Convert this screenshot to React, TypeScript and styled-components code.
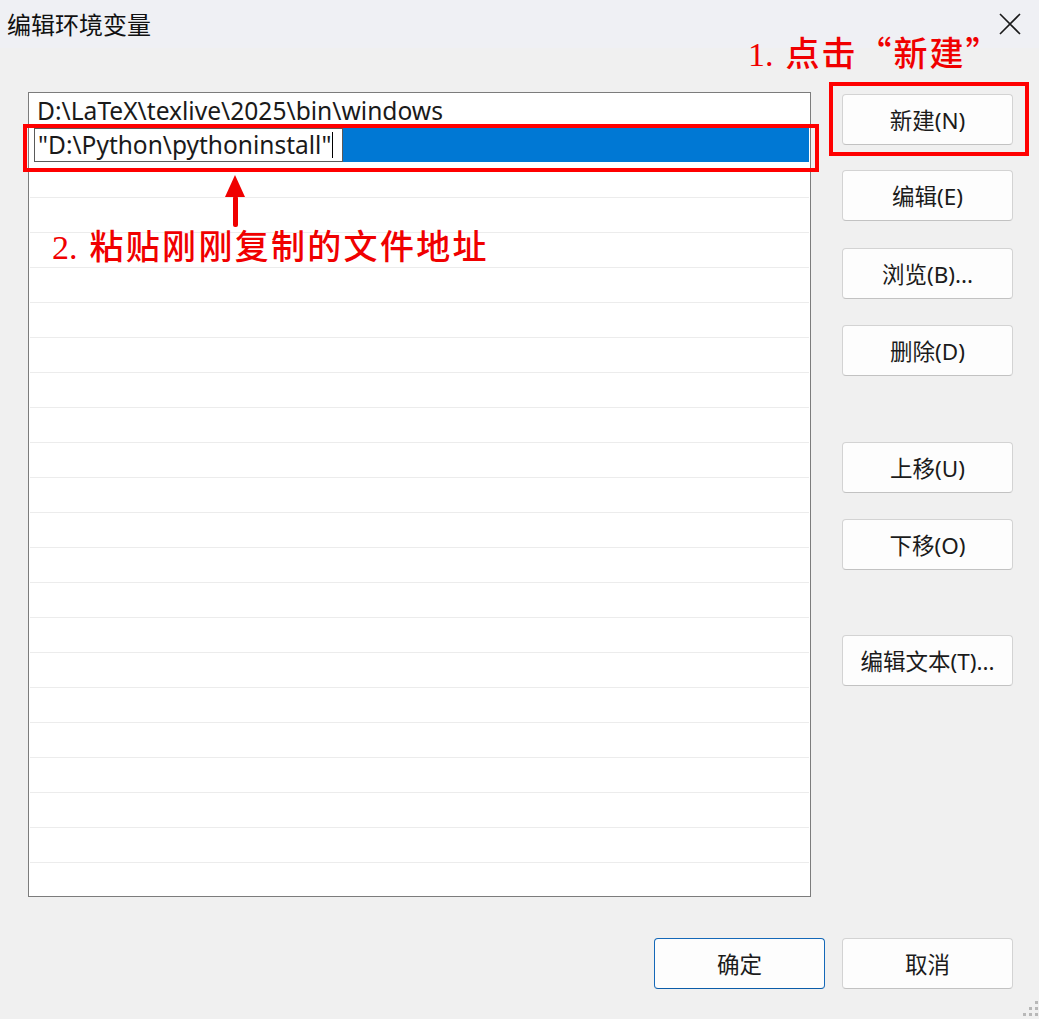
import React, { FC } from 'react';
import styled, { createGlobalStyle } from 'styled-components';

const GlobalStyle = createGlobalStyle`
  html, body {
    margin: 0;
    padding: 0;
    background: #f0f0f0;
  }
`;

const UI_FONT = `"Noto Sans", "Noto Sans CJK SC", sans-serif`;
const NOTE_FONT = `"Liberation Serif", "Noto Sans CJK SC", serif`;

const Window = styled.div`
  position: relative;
  width: 1039px;
  height: 1019px;
  background: #f0f0f0;
  font-family: ${UI_FONT};
  color: #1a1a1a;
  overflow: hidden;
  display: flex;
  flex-direction: column;
`;

const TitleBar = styled.div`
  height: 48px;
  display: flex;
  align-items: center;
  justify-content: space-between;
  padding: 0 18px 0 7px;
  background: #eff0f4;
  box-sizing: border-box;
`;

const Title = styled.div`
  font-family: "Noto Sans CJK SC", sans-serif;
  font-size: 24px;
  margin-top: -2px;
  color: #111;
`;

const CloseButton = styled.div`
  width: 22px;
  height: 22px;
  margin-top: -1px;
  display: flex;
`;

const Body = styled.div`
  display: flex;
  padding: 44px 0 0 28px;
`;

const ListBox = styled.div`
  width: 783px;
  height: 805px;
  box-sizing: border-box;
  border: 1px solid #7c7c7c;
  background: #fff;
  overflow: hidden;
`;

const Row = styled.div<{ $lined?: boolean }>`
  height: 35px;
  box-sizing: border-box;
  display: flex;
  align-items: center;
  margin: 0 1px;
  border-bottom: 1px solid ${(p) => (p.$lined ? '#ececec' : 'transparent')};
`;

const RowText = styled.span`
  padding-left: 7px;
  font-size: 24.6px;
  line-height: 30px;
  margin-top: 1px;
  white-space: nowrap;
`;

const EditRow = styled.div`
  height: 35px;
  display: flex;
  padding: 0 1px 1px 5px;
  box-sizing: border-box;
`;

const EditBox = styled.div`
  width: 309px;
  box-sizing: border-box;
  border: 1px solid #5a5a5a;
  background: #fff;
  display: flex;
  align-items: center;
  padding-left: 3px;
  font-size: 24.5px;
  line-height: 30px;
  white-space: nowrap;
`;

const Caret = styled.span`
  display: inline-block;
  width: 1px;
  height: 26px;
  background: #000;
  margin-left: 1px;
`;

const Selection = styled.div`
  flex: 1;
  background: #0078d4;
`;

const ButtonColumn = styled.div`
  display: flex;
  flex-direction: column;
  margin-left: 31px;
  padding-top: 2px;
`;

const Button = styled.div<{ $top?: number; $primary?: boolean }>`
  width: 171px;
  height: 51px;
  box-sizing: border-box;
  margin-top: ${(p) => p.$top ?? 0}px;
  background: #fdfdfd;
  border: 1px solid ${(p) => (p.$primary ? '#1468b8' : '#d3d3d3')};
  border-bottom-color: ${(p) => (p.$primary ? '#0b5ca8' : '#c2c2c2')};
  border-radius: 4px;
  display: flex;
  align-items: center;
  justify-content: center;
  font-size: 22.5px;
  color: #1b1b1b;
  white-space: nowrap;
`;

const Footer = styled.div`
  display: flex;
  justify-content: flex-end;
  gap: 17px;
  padding: 41px 26px 0 0;
`;

const RedFrame = styled.div<{ $x: number; $y: number; $w: number; $h: number }>`
  position: absolute;
  left: ${(p) => p.$x}px;
  top: ${(p) => p.$y}px;
  width: ${(p) => p.$w}px;
  height: ${(p) => p.$h}px;
  box-sizing: border-box;
  border: 4px solid #ff0000;
  pointer-events: none;
`;

const Note = styled.div<{ $x: number; $y: number }>`
  position: absolute;
  left: ${(p) => p.$x}px;
  top: ${(p) => p.$y}px;
  font-family: ${NOTE_FONT};
  color: #f00000;
  font-size: 34px;
  font-weight: 500;
  white-space: nowrap;
  line-height: 1;
`;

const NoteCjk = styled.span<{ $spacing?: number; $gap?: number }>`
  font-family: "Noto Sans CJK SC", sans-serif;
  letter-spacing: ${(p) => p.$spacing ?? 0}px;
  margin-left: ${(p) => p.$gap ?? 0}px;
`;

const Arrow = styled.svg`
  position: absolute;
  left: 224px;
  top: 174px;
`;

const Grip = styled.svg`
  position: absolute;
  right: 0;
  bottom: 0;
`;

const entries = ['D:\\LaTeX\\texlive\\2025\\bin\\windows'];
const rowCount = 23;

const sideButtons: { label: string; top: number }[] = [
  { label: '新建(N)', top: 0 },
  { label: '编辑(E)', top: 25 },
  { label: '浏览(B)...', top: 27 },
  { label: '删除(D)', top: 26 },
  { label: '上移(U)', top: 66 },
  { label: '下移(O)', top: 26 },
  { label: '编辑文本(T)...', top: 65 },
];

const App: FC = () => {
  const emptyRows = Array.from({ length: rowCount - 2 }, (_, i) => i);
  return (
    <Window>
      <GlobalStyle />
      <TitleBar>
        <Title>编辑环境变量</Title>
        <CloseButton>
          <svg width="22" height="22" viewBox="0 0 22 22">
            <path d="M1 1 L21 21 M21 1 L1 21" stroke="#1a1a1a" strokeWidth="1.6" fill="none" />
          </svg>
        </CloseButton>
      </TitleBar>
      <Body>
        <ListBox>
          <Row>
            <RowText>{entries[0]}</RowText>
          </Row>
          <EditRow>
            <EditBox>
              "D:\Python\pythoninstall"
              <Caret />
            </EditBox>
            <Selection />
          </EditRow>
          {emptyRows.map((i) => (
            <Row key={i} $lined />
          ))}
        </ListBox>
        <ButtonColumn>
          {sideButtons.map((b) => (
            <Button key={b.label} $top={b.top}>
              {b.label}
            </Button>
          ))}
        </ButtonColumn>
      </Body>
      <Footer>
        <Button $primary>确定</Button>
        <Button>取消</Button>
      </Footer>

      <RedFrame $x={23} $y={124} $w={796} $h={48} />
      <RedFrame $x={829} $y={82} $w={200} $h={74} />
      <Note $x={748} $y={35}>
        1.<NoteCjk $spacing={2} $gap={12}>点击“新建”</NoteCjk>
      </Note>
      <Note $x={52} $y={228}>
        2.<NoteCjk $spacing={2.3} $gap={12}>粘贴刚刚复制的文件地址</NoteCjk>
      </Note>
      <Arrow width="22" height="56" viewBox="0 0 22 56">
        <polygon points="11,1 1,23 21,23" fill="#f00000" />
        <rect x="9" y="22" width="5" height="31" rx="2" fill="#f00000" />
      </Arrow>
      <Grip width="16" height="20" viewBox="0 0 16 20">
        <rect x="12" y="2" width="3" height="3" fill="#b8b8b8" />
        <rect x="6" y="8" width="3" height="3" fill="#b8b8b8" />
        <rect x="12" y="8" width="3" height="3" fill="#b8b8b8" />
        <rect x="0" y="14" width="3" height="3" fill="#b8b8b8" />
        <rect x="6" y="14" width="3" height="3" fill="#b8b8b8" />
        <rect x="12" y="14" width="3" height="3" fill="#b8b8b8" />
      </Grip>
    </Window>
  );
};

export default App;
